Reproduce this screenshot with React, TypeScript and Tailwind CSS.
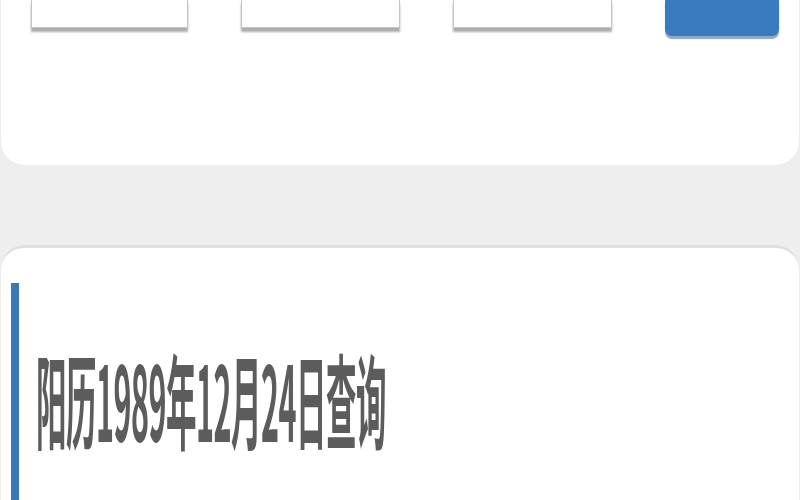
export default function App() {
  const selects = ["w-[157px]", "w-[159px]", "w-[159px]"];

  return (
    <div className="flex h-[500px] w-[800px] flex-col overflow-hidden bg-[#eeeeee] font-['Noto_Sans_CJK_SC',sans-serif]">
      {/* date picker card, scrolled so only its lower half shows */}
      <section className="mx-[1px] h-[165px] shrink-0 rounded-b-[24px] bg-white">
        <div className="flex items-start pl-[30px]">
          <div className={`${selects[0]} h-[28px] border-x border-b border-[#c4c4c4] bg-white shadow-[0_4px_2px_rgba(0,0,0,0.32)]`} />
          <div className="w-[53px]" />
          <div className={`${selects[1]} h-[28px] border-x border-b border-[#c4c4c4] bg-white shadow-[0_4px_2px_rgba(0,0,0,0.32)]`} />
          <div className="w-[53px]" />
          <div className={`${selects[2]} h-[28px] border-x border-b border-[#c4c4c4] bg-white shadow-[0_4px_2px_rgba(0,0,0,0.32)]`} />
          <div className="w-[53px]" />
          <button
            type="button"
            className="h-[36px] w-[114px] rounded-b-[7px] bg-[#3a7bbf] shadow-[0_3px_1px_rgba(30,80,140,0.5)]"
          />
        </div>
      </section>

      <section className="mx-[1px] mt-[80px] flex flex-1 flex-col rounded-t-[24px] border-t-[3px] border-[#e0e0e0] bg-white pt-[35px]">
        <div className="ml-[10px] flex-1 border-l-[8px] border-[#3a78b8] pl-[17px] pt-[100px]">
          <h2 className="origin-center scale-y-[3.4] text-[30.5px] font-bold leading-[30px] tracking-[-0.5px] text-[#5c5c5c]">
            阳历1989年12月24日查询
          </h2>
        </div>
      </section>
    </div>
  );
}
